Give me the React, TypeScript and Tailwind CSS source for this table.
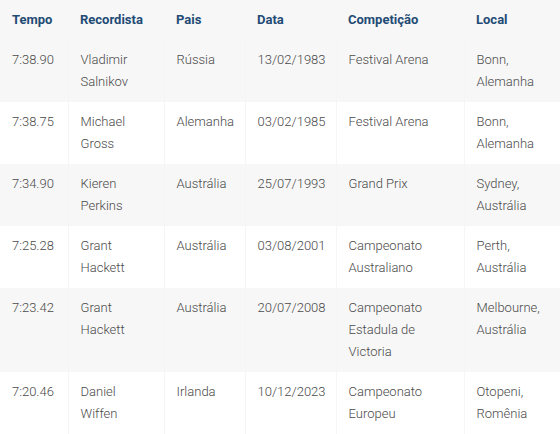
import React from "react";

const headTitles = ["Tempo", "Recordista", "Pais", "Data", "Competição", "Local"];
const colWidths = ["w-[68px]", "w-[96px]", "w-[81px]", "w-[91px]", "w-[128px]", "w-[96px]"];

const records = [
  ["7:38.90", "Vladimir Salnikov", "Rússia", "13/02/1983", "Festival Arena", "Bonn, Alemanha"],
  ["7:38.75", "Michael Gross", "Alemanha", "03/02/1985", "Festival Arena", "Bonn, Alemanha"],
  ["7:34.90", "Kieren Perkins", "Austrália", "25/07/1993", "Grand Prix", "Sydney, Austrália"],
  ["7:25.28", "Grant Hackett", "Austrália", "03/08/2001", "Campeonato Australiano", "Perth, Austrália"],
  ["7:23.42", "Grant Hackett", "Austrália", "20/07/2008", "Campeonato Estadula de Victoria", "Melbourne, Austrália"],
  ["7:20.46", "Daniel Wiffen", "Irlanda", "10/12/2023", "Campeonato Europeu", "Otopeni, Romênia"],
];

export default function App() {
  return (
    <div
      className="w-[560px] h-[434px] bg-white overflow-hidden"
      style={{ fontFamily: "Roboto, 'Liberation Sans', sans-serif" }}
    >
      <table className="w-[560px] table-fixed border-collapse text-[13px] leading-[22px]">
        <colgroup>
          {colWidths.map((w, i) => (
            <col key={i} className={w} />
          ))}
        </colgroup>
        <thead>
          <tr className="bg-[#f7f7f7]">
            {headTitles.map((title) => (
              <th
                key={title}
                className="px-3 py-[9px] text-left font-bold text-[#1f4b75] align-top"
              >
                {title}
              </th>
            ))}
          </tr>
        </thead>
        <tbody>
          {records.map((row, idx) => (
            <tr key={idx} className={idx % 2 === 0 ? "bg-[#f7f7f7]" : "bg-white"}>
              {row.map((cell, j) => (
                <td
                  key={j}
                  className="px-3 py-[9px] align-top text-[#4a4a4a] font-light border-r border-[#f5f5f5] last:border-r-0"
                >
                  {cell}
                </td>
              ))}
            </tr>
          ))}
        </tbody>
      </table>
    </div>
  );
}
